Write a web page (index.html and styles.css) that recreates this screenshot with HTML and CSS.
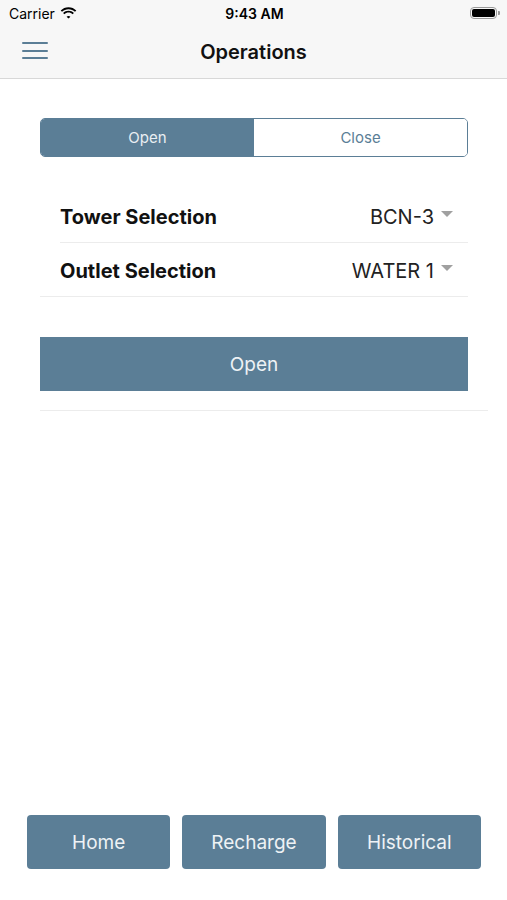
FILE: index.html
```html
<!DOCTYPE html>
<html lang="en">
<head>
    <meta charset="UTF-8">
    <meta name="viewport" content="width=device-width, initial-scale=1.0">
    <title>Operations</title>
    <link rel="stylesheet" href="styles.css">
</head>
<body>
    <div class="app">
        <header class="top">
            <div class="status-bar">
                <div class="status-left">
                    <span>Carrier</span>
                    <svg class="wifi" width="17" height="12" viewBox="0 0 17 12">
                        <path d="M8.5 2.2c2.5 0 4.8 1 6.5 2.6l1.3-1.3C14.2 1.4 11.5.2 8.5.2S2.8 1.4.7 3.5L2 4.8c1.7-1.6 4-2.6 6.5-2.6z" fill="#000"/>
                        <path d="M8.5 5.6c1.6 0 3 .6 4.1 1.6l1.3-1.3C12.5 4.6 10.6 3.7 8.5 3.7S4.5 4.6 3.1 5.9l1.3 1.3c1.1-1 2.5-1.6 4.1-1.6z" fill="#000"/>
                        <path d="M8.5 8.9c.8 0 1.4.3 1.9.8L8.5 11.6 6.6 9.7c.5-.5 1.1-.8 1.9-.8z" fill="#000"/>
                    </svg>
                </div>
                <div class="status-time">9:43 AM</div>
                <div class="status-right">
                    <div class="battery"><div class="battery-level"></div></div>
                    <div class="battery-cap"></div>
                </div>
            </div>
            <nav class="nav-bar">
                <button class="menu-btn" type="button">
                    <span></span><span></span><span></span>
                </button>
                <h1>Operations</h1>
            </nav>
        </header>

        <main class="content">
            <div class="segmented">
                <div class="segment active">Open</div>
                <div class="segment">Close</div>
            </div>

            <div class="selections">
                <div class="select-row">
                    <span class="select-label">Tower Selection</span>
                    <span class="select-value">BCN-3 <i class="caret"></i></span>
                </div>
                <div class="select-row last">
                    <span class="select-label">Outlet Selection</span>
                    <span class="select-value">WATER 1 <i class="caret"></i></span>
                </div>
            </div>

            <button class="action-btn" type="button">Open</button>
            <div class="content-divider"></div>
        </main>

        <footer class="bottom-bar">
            <button type="button">Home</button>
            <button type="button">Recharge</button>
            <button type="button">Historical</button>
        </footer>
    </div>
</body>
</html>
```

FILE: styles.css
```css
* {
    box-sizing: border-box;
}
body {
    margin: 0;
    font-family: 'Inter', 'Liberation Sans', Arial, sans-serif;
    background-color: #fff;
    color: #000;
}
.app {
    width: 507px;
    height: 900px;
    display: flex;
    flex-direction: column;
}
.top {
    background-color: #f7f7f7;
    border-bottom: 1px solid #d8d8d8;
}
.status-bar {
    height: 28px;
    display: flex;
    align-items: center;
    justify-content: space-between;
    padding: 0 7px 2px 9px;
    font-size: 14px;
}
.status-left {
    display: flex;
    align-items: center;
    gap: 5px;
    width: 120px;
}
.status-time {
    font-weight: 600;
    font-size: 14px;
}
.status-right {
    width: 120px;
    display: flex;
    justify-content: flex-end;
    align-items: center;
}
.battery {
    width: 27px;
    height: 12px;
    border: 1px solid #999;
    border-radius: 4px;
    padding: 1px;
}
.battery-level {
    width: 100%;
    height: 100%;
    background-color: #000;
    border-radius: 2px;
}
.battery-cap {
    width: 2px;
    height: 4px;
    background-color: #999;
    border-radius: 0 1px 1px 0;
    margin-left: 1px;
}
.nav-bar {
    height: 50px;
    display: flex;
    align-items: center;
    justify-content: center;
    position: relative;
}
.nav-bar h1 {
    margin: 0 0 2px;
    font-size: 20px;
    font-weight: 600;
    color: #111;
}
.menu-btn {
    position: absolute;
    left: 22px;
    top: 14px;
    width: 26px;
    height: 17px;
    padding: 0;
    border: none;
    background: none;
    display: flex;
    flex-direction: column;
    justify-content: space-between;
}
.menu-btn span {
    display: block;
    height: 2px;
    width: 100%;
    background-color: #5b7e96;
    border-radius: 1px;
}
.content {
    flex: 1;
    padding: 39px 19px 0 40px;
}
.segmented {
    width: 428px;
    height: 39px;
    display: flex;
    border: 1px solid #5b7e96;
    border-radius: 5px;
    overflow: hidden;
}
.segment {
    flex: 1;
    display: flex;
    align-items: center;
    justify-content: center;
    font-size: 15px;
    color: #5b7e96;
    background-color: #fff;
}
.segment.active {
    background-color: #5b7e96;
    color: #e9eef2;
}
.selections {
    width: 428px;
    margin-top: 32px;
}
.select-row {
    height: 54px;
    margin-left: 20px;
    display: flex;
    align-items: center;
    justify-content: space-between;
    padding: 2px 15px 0 0;
    border-bottom: 1px solid #ececec;
}
.select-row.last {
    margin-left: 0;
    padding-left: 20px;
}
.select-label {
    font-size: 20px;
    font-weight: 700;
    color: #111;
}
.select-value {
    font-size: 20px;
    color: #222;
    display: flex;
    align-items: center;
    gap: 7px;
}
.caret {
    width: 0;
    height: 0;
    border-left: 6px solid transparent;
    border-right: 6px solid transparent;
    border-top: 6px solid #a0a0a0;
    margin-top: -5px;
}
.action-btn {
    display: block;
    width: 428px;
    height: 54px;
    margin-top: 40px;
    border: none;
    border-radius: 0;
    background-color: #5b7e96;
    color: #eef2f5;
    font-family: inherit;
    font-size: 19px;
}
.content-divider {
    margin-top: 19px;
    height: 1px;
    background-color: #ececec;
}
.bottom-bar {
    display: flex;
    gap: 12px;
    padding: 0 26px 31px 27px;
}
.bottom-bar button {
    flex: 1;
    height: 54px;
    border: none;
    border-radius: 4px;
    background-color: #5b7e96;
    color: #eef2f5;
    font-family: inherit;
    font-size: 19px;
}
```
